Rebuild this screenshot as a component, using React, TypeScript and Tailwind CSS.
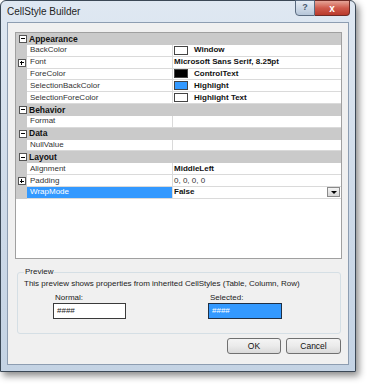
import React from "react";

const F = { fontFamily: '"Liberation Sans", Arial, sans-serif' } as const;

const PMBox = ({ plus }: { plus?: boolean }) => (
  <div className="relative w-[8px] h-[8px] border border-[#555] bg-white">
    <div className="absolute left-[1px] top-[2.5px] w-[4px] h-[1px] bg-black" />
    {plus && <div className="absolute left-[2.5px] top-[1px] w-[1px] h-[4px] bg-black" />}
  </div>
);

const Cat = ({ label }: { label: string }) => (
  <div className="flex h-[11.85px] items-center bg-[#cacaca]">
    <div className="w-[13px] flex justify-center items-center">
      <PMBox />
    </div>
    <span className="font-bold text-[8.5px] text-[#111] leading-none">{label}</span>
  </div>
);

type PropRow = {
  name: string;
  value?: string;
  bold?: boolean;
  swatch?: string;
  plus?: boolean;
  selected?: boolean;
};

const Prop = ({ name, value, bold, swatch, plus, selected }: PropRow) => (
  <div className="flex h-[11.85px]">
    <div className="w-[11px] shrink-0 bg-[#cacaca] flex items-center justify-center">
      {plus && <PMBox plus />}
    </div>
    <div
      className={`w-[146px] shrink-0 flex items-center pl-[3px] border-b border-r border-[#dadada] text-[8px] leading-none ${
        selected ? "bg-[#3399ff] text-white" : "bg-white text-[#333]"
      }`}
    >
      {name}
    </div>
    <div className="flex-1 flex items-center border-b border-[#dadada] bg-white pl-[1px] relative">
      {swatch && (
        <div
          className="w-[14px] h-[9px] border border-[#444] mr-[6px] shrink-0"
          style={{ background: swatch }}
        />
      )}
      <span className={`text-[8px] leading-none text-[#111] ${bold ? "font-bold" : "text-[#333]"}`}>
        {value}
      </span>
      {selected && (
        <div className="ml-auto mr-[1px] w-[13px] h-[10px] border border-[#8a8a8a] bg-gradient-to-b from-[#f4f4f4] to-[#d6d6d6] flex items-center justify-center">
          <div className="w-0 h-0 border-l-[3px] border-r-[3px] border-t-[3px] border-l-transparent border-r-transparent border-t-black" />
        </div>
      )}
    </div>
  </div>
);

export default function App() {
  return (
    <div className="w-[371px] h-[387px] bg-white overflow-hidden" style={F}>
      <div className="w-[356px] h-[372px] rounded-t-[6px] border border-[#3b4856] bg-gradient-to-b from-[#dfe8f2] via-[#cfdbe9] to-[#c4d3e4] shadow-[3px_4px_7px_rgba(0,0,0,0.45)] flex flex-col relative">
        {/* title bar */}
        <div className="h-[21px] flex items-center pl-[6px] relative">
          <span className="text-[10px] text-[#1e1e1e]">CellStyle Builder</span>
          <div className="absolute right-[5px] top-[-1px] flex">
            <div className="w-[20px] h-[16px] rounded-bl-[4px] border border-[#5a6b80] bg-gradient-to-b from-[#e6edf5] to-[#b6c6d9] flex items-center justify-center text-[9px] font-bold text-[#4a5a6e]">
              ?
            </div>
            <div className="w-[35px] h-[16px] rounded-br-[4px] border border-l-0 border-[#6e2a25] bg-gradient-to-b from-[#e5a397] via-[#cf5a4c] to-[#b93a2c] flex items-center justify-center text-[10px] font-bold text-white">
              x
            </div>
          </div>
        </div>
        {/* client */}
        <div className="mx-[6px] h-[343px] border border-[#8d9db1] bg-[#f0f0f0] flex flex-col">
          {/* property grid */}
          <div className="mt-[9px] ml-[7px] w-[327px] h-[227px] border border-[#a0a0a0] bg-white flex flex-col">
            <Cat label="Appearance" />
            <Prop name="BackColor" value="Window" bold swatch="#ffffff" />
            <Prop name="Font" value="Microsoft Sans Serif, 8.25pt" bold plus />
            <Prop name="ForeColor" value="ControlText" bold swatch="#000000" />
            <Prop name="SelectionBackColor" value="Highlight" bold swatch="#3399ff" />
            <Prop name="SelectionForeColor" value="Highlight Text" bold swatch="#ffffff" />
            <Cat label="Behavior" />
            <Prop name="Format" />
            <Cat label="Data" />
            <Prop name="NullValue" />
            <Cat label="Layout" />
            <Prop name="Alignment" value="MiddleLeft" bold />
            <Prop name="Padding" value="0, 0, 0, 0" plus />
            <Prop name="WrapMode" value="False" bold selected />
          </div>
          {/* preview */}
          <fieldset className="mt-[8px] ml-[9px] w-[324px] h-[67px] border border-[#d5dfe5] rounded-[3px] px-[6px] pb-0">
            <legend className="ml-[0px] px-[1px] text-[8px] text-[#222] leading-[10px]">Preview</legend>
            <div className="mt-[2px] text-[8px] text-[#222] leading-[10px]">
              This preview shows properties from inherited CellStyles (Table, Column, Row)
            </div>
            <div className="flex mt-[4px]">
              <div className="ml-[29px] w-[73px] flex flex-col">
                <span className="pl-[2px] text-[8px] text-[#222] leading-[9px]">Normal:</span>
                <div className="mt-[1px] h-[16px] border-[1.5px] border-[#3a3a3a] bg-white flex items-center pl-[3px] text-[8px] text-[#222]">
                  ####
                </div>
              </div>
              <div className="ml-[82px] w-[74px] flex flex-col">
                <span className="pl-[2px] text-[8px] text-[#222] leading-[9px]">Selected:</span>
                <div className="mt-[1px] h-[16px] border-[1.5px] border-[#1f2f44] bg-[#3399ff] flex items-center pl-[3px] text-[8px] text-white">
                  ####
                </div>
              </div>
            </div>
          </fieldset>
          {/* buttons */}
          <div className="flex justify-end gap-[5px] mr-[7px] mt-[4px]">
            <div className="w-[54px] h-[16px] rounded-[3px] border border-[#707070] bg-gradient-to-b from-[#f4f4f4] via-[#ebebeb] to-[#d9d9d9] flex items-center justify-center text-[8.5px] text-[#111]">
              OK
            </div>
            <div className="w-[55px] h-[16px] rounded-[3px] border border-[#707070] bg-gradient-to-b from-[#f4f4f4] via-[#ebebeb] to-[#d9d9d9] flex items-center justify-center text-[8.5px] text-[#111]">
              Cancel
            </div>
          </div>
        </div>
      </div>
    </div>
  );
}
